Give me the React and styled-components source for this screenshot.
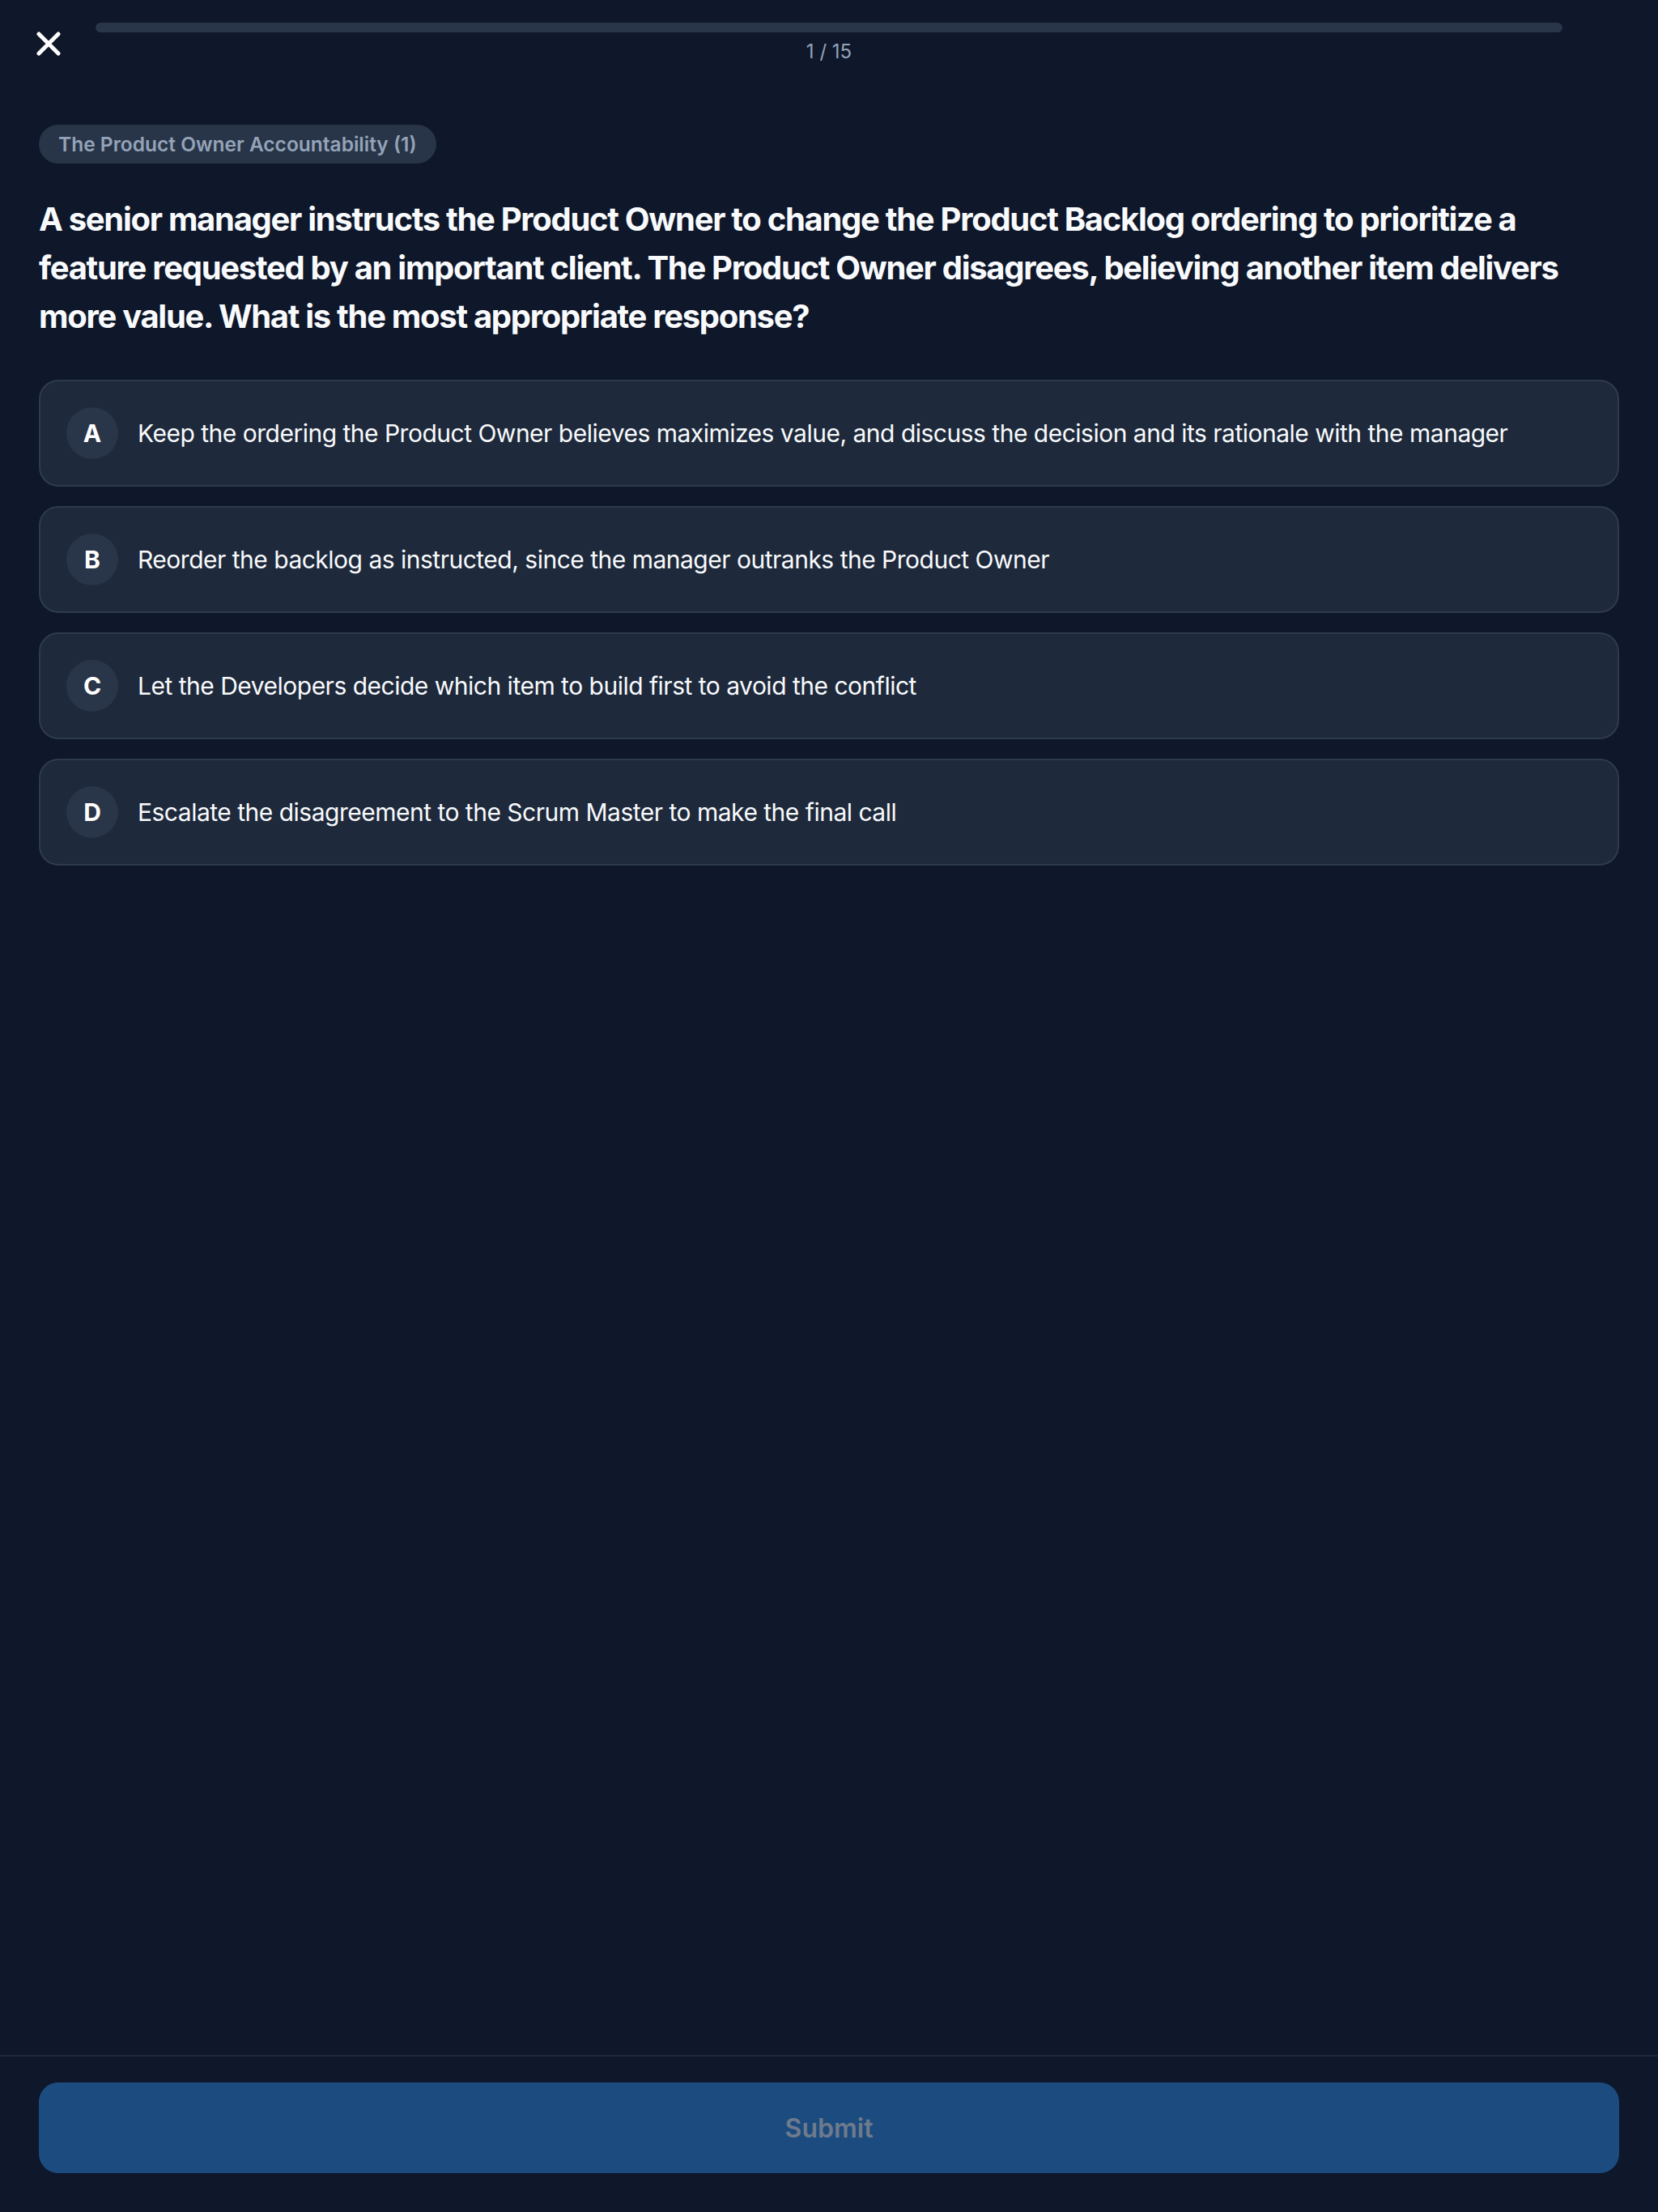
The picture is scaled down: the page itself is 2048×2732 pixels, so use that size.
import styled, { createGlobalStyle } from "styled-components";

const GlobalStyle = createGlobalStyle`
  * {
    box-sizing: border-box;
  }

  html,
  body {
    margin: 0;
    padding: 0;
    background: #0f172a;
  }

  body {
    font-family: "Inter", "Noto Sans", "Liberation Sans", sans-serif;
    color: #f8fafc;
    -webkit-font-smoothing: antialiased;
  }
`;

const options = [
  {
    letter: "A",
    text: "Keep the ordering the Product Owner believes maximizes value, and discuss the decision and its rationale with the manager",
  },
  {
    letter: "B",
    text: "Reorder the backlog as instructed, since the manager outranks the Product Owner",
  },
  {
    letter: "C",
    text: "Let the Developers decide which item to build first to avoid the conflict",
  },
  {
    letter: "D",
    text: "Escalate the disagreement to the Scrum Master to make the final call",
  },
];

const CloseIcon = () => (
  <svg width="30" height="30" viewBox="0 0 30 30" fill="none">
    <path
      d="M3 3 L27 27 M27 3 L3 27"
      stroke="#ffffff"
      strokeWidth="5"
      strokeLinecap="round"
    />
  </svg>
);

const App = () => {
  const current = 1;
  const total = 15;
  const answered = 0;

  return (
    <>
      <GlobalStyle />
      <Page>
        <Header>
          <CloseButton aria-label="Close">
            <CloseIcon />
          </CloseButton>
          <Progress>
            <Track>
              <Fill style={{ width: `${(answered / total) * 100}%` }} />
            </Track>
            <Counter>
              {current} / {total}
            </Counter>
          </Progress>
          <Spacer />
        </Header>

        <Main>
          <Topic>The Product Owner Accountability (1)</Topic>
          <Question>
            A senior manager instructs the Product Owner to change the Product
            Backlog ordering to prioritize a feature requested by an important
            client. The Product Owner disagrees, believing another item
            delivers more value. What is the most appropriate response?
          </Question>
          <Options>
            {options.map((option) => (
              <Option key={option.letter}>
                <Letter>{option.letter}</Letter>
                <OptionText>{option.text}</OptionText>
              </Option>
            ))}
          </Options>
        </Main>

        <Footer>
          <SubmitButton disabled>Submit</SubmitButton>
        </Footer>
      </Page>
    </>
  );
};

export default App;

const Page = styled.div`
  min-height: 100vh;
  display: flex;
  flex-direction: column;
  background: #0f172a;
`;

const Header = styled.header`
  display: flex;
  align-items: center;
  gap: 30px;
  padding: 26px 32px 0;
`;

const CloseButton = styled.button`
  width: 56px;
  height: 56px;
  flex-shrink: 0;
  display: flex;
  align-items: center;
  justify-content: center;
  padding: 0;
  border: none;
  background: transparent;
  cursor: pointer;
`;

const Spacer = styled.div`
  width: 56px;
  flex-shrink: 0;
`;

const Progress = styled.div`
  flex: 1;
  display: flex;
  flex-direction: column;
  align-items: center;
  gap: 8px;
`;

const Track = styled.div`
  width: 100%;
  height: 12px;
  border-radius: 6px;
  background: #293548;
  overflow: hidden;
`;

const Fill = styled.div`
  height: 100%;
  background: #3b82f6;
  border-radius: 6px;
`;

const Counter = styled.div`
  font-size: 24px;
  line-height: 32px;
  color: #94a3b8;
`;

const Main = styled.main`
  flex: 1;
  display: flex;
  flex-direction: column;
  align-items: flex-start;
  padding: 72px 48px 48px;
`;

const Topic = styled.span`
  display: inline-flex;
  align-items: center;
  height: 48px;
  padding: 0 24px;
  border-radius: 999px;
  background: #283548;
  color: #94a3b8;
  font-size: 24.5px;
  font-weight: 600;
`;

const Question = styled.h1`
  margin: 39px 0 48px;
  font-size: 40px;
  line-height: 60px;
  font-weight: 700;
  color: #f8fafc;
  letter-spacing: -1.3px;
`;

const Options = styled.div`
  width: 100%;
  display: flex;
  flex-direction: column;
  gap: 24px;
`;

const Option = styled.button`
  width: 100%;
  display: flex;
  align-items: center;
  gap: 24px;
  padding: 32px 32px;
  border: 2px solid #2e3b4e;
  border-radius: 24px;
  background: #1e293b;
  text-align: left;
  font-family: inherit;
  cursor: pointer;
`;

const Letter = styled.span`
  width: 64px;
  height: 64px;
  flex-shrink: 0;
  display: flex;
  align-items: center;
  justify-content: center;
  border-radius: 50%;
  background: #293548;
  color: #ffffff;
  font-size: 30px;
  font-weight: 700;
`;

const OptionText = styled.span`
  font-size: 30px;
  line-height: 48px;
  color: #f8fafc;
  letter-spacing: -0.5px;
`;

const Footer = styled.footer`
  padding: 32px 48px 48px;
  border-top: 2px solid #1e293b;
`;

const SubmitButton = styled.button`
  width: 100%;
  height: 112px;
  border: none;
  border-radius: 24px;
  background: #1c4c7f;
  color: #6f7b8c;
  font-family: inherit;
  font-size: 32px;
  font-weight: 600;
  cursor: not-allowed;
`;
